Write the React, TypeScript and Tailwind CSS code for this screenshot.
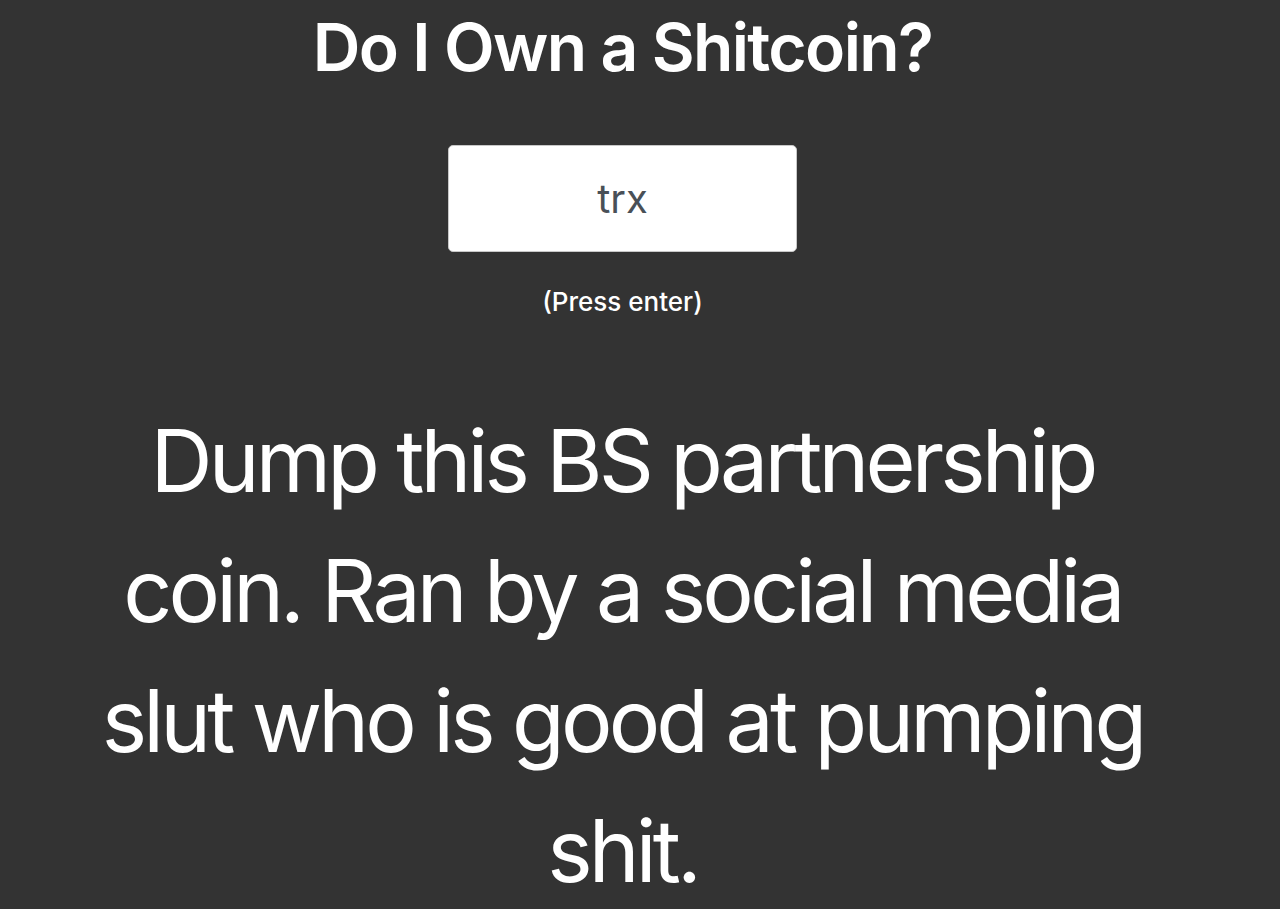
export default function App() {
  return (
    <div className="min-h-[909px] w-full bg-[#333333] text-white overflow-hidden" style={{ fontFamily: 'Inter, "Noto Sans", sans-serif' }}>
      <div className="w-[1245px] flex flex-col items-center">
        <h1 className="mt-[5px] text-[66px] leading-[84px] font-semibold tracking-[-0.025em]">Do I Own a Shitcoin?</h1>
        <input
          defaultValue="trx"
          className="mt-[56px] w-[349px] h-[107px] rounded-[5px] border border-[#c8c8c8] bg-white text-center text-[40px] text-[#495057] outline-none"
        />
        <p className="mt-[34px] text-[26px] leading-[32px] font-medium">(Press enter)</p>
        <p className="mt-[78px] w-[1080px] text-center text-[86px] leading-[130px] tracking-[-0.045em]">
          Dump this BS partnership coin. Ran by a social media slut who is good at pumping shit.
        </p>
      </div>
    </div>
  );
}
